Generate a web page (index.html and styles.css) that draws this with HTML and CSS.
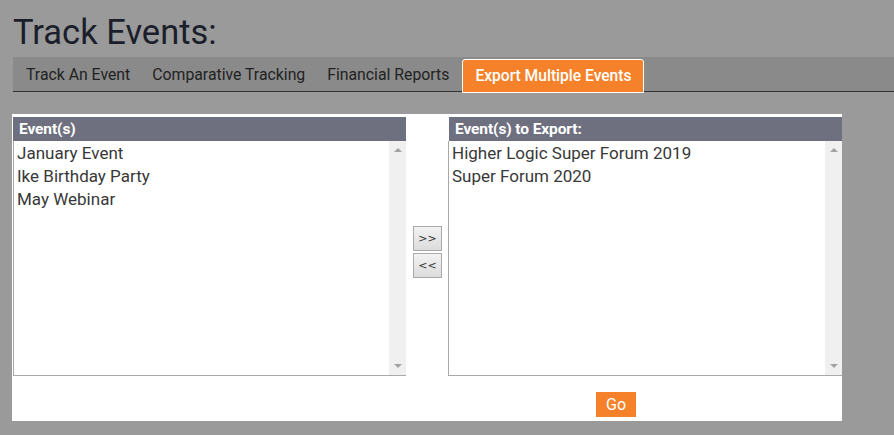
FILE: index.html
```html
<!DOCTYPE html>
<html>
<head>
<meta charset="utf-8">
<link rel="stylesheet" href="styles.css">
</head>
<body>
<h1 class="title">Track Events:</h1>
<nav class="tabs">
  <a class="tab">Track An Event</a>
  <a class="tab">Comparative Tracking</a>
  <a class="tab">Financial Reports</a>
  <a class="tab active">Export Multiple Events</a>
</nav>
<div class="panel">
  <div class="lists">
    <div class="col col-left">
      <div class="head">Event(s)</div>
      <div class="listbox">
        <ul class="items">
          <li>January Event</li>
          <li>Ike Birthday Party</li>
          <li>May Webinar</li>
        </ul>
        <div class="scroll"><span class="arr up"></span><span class="arr down"></span></div>
      </div>
    </div>
    <div class="mid">
      <button class="mv">&gt;&gt;</button>
      <button class="mv">&lt;&lt;</button>
    </div>
    <div class="col col-right">
      <div class="head">Event(s) to Export:</div>
      <div class="listbox">
        <ul class="items">
          <li>Higher Logic Super Forum 2019</li>
          <li>Super Forum 2020</li>
        </ul>
        <div class="scroll"><span class="arr up"></span><span class="arr down"></span></div>
      </div>
    </div>
  </div>
  <div class="go-row"><button class="go">Go</button></div>
</div>
</body>
</html>
```

FILE: styles.css
```css
html, body { margin: 0; padding: 0; }
body {
  background: #9a9a9a;
  font-family: Roboto, "Liberation Sans", sans-serif;
  width: 894px;
  height: 435px;
  overflow: hidden;
}
.title {
  margin: 0;
  padding: 12px 0 0 13px;
  height: 57px;
  box-sizing: border-box;
  font-weight: 400;
  font-size: 34.5px;
  line-height: 40px;
  color: #1b1e2b;
}
.tabs {
  margin-left: 13px;
  height: 34px;
  background: #8a8a8a;
  border-bottom: 1px solid #333;
  display: flex;
  align-items: flex-start;
  padding-left: 1px;
}
.tab {
  font-size: 15.8px;
  color: #222;
  padding: 0 11px 0 12px;
  line-height: 36px;
  white-space: nowrap;
}
.tab + .tab { padding-left: 11px; }
.tab.active {
  margin-top: 2px;
  margin-left: 2px;
  height: 34px;
  line-height: 32px;
  box-sizing: border-box;
  background: #f5822a;
  color: #fff;
  border: 1px solid #fff;
  border-radius: 3px 3px 0 0;
  padding: 0 11px 0 12px;
  font-size: 15.6px;
  font-weight: 500;
}
.panel {
  margin: 22px 0 0 12px;
  width: 830px;
  height: 307px;
  background: #fff;
  padding: 3px 0 0 1px;
  box-sizing: border-box;
}
.lists {
  display: flex;
}
.col-left { width: 393px; }
.col-right { width: 394px; }
.mid {
  width: 42px;
  padding-top: 109px;
  padding-left: 7px;
  box-sizing: border-box;
  display: flex;
  flex-direction: column;
  gap: 2px;
}
.mv {
  width: 29px;
  height: 25px;
  padding: 0;
  border: 1px solid #a9a9a9;
  background: linear-gradient(#f2f2f2, #dcdcdc);
  font-family: "DejaVu Sans", sans-serif;
  font-size: 11px;
  color: #333;
}
.head {
  height: 24px;
  background: #6e7080;
  color: #fff;
  font-weight: 700;
  font-size: 15.5px;
  line-height: 24px;
  padding-left: 6px;
  letter-spacing: -0.1px;
}
.col-right .head { margin-left: 1px; padding-left: 6px; }
.listbox {
  height: 235px;
  border-left: 1px solid #a9a9a9;
  border-bottom: 1px solid #a9a9a9;
  box-sizing: border-box;
  display: flex;
}
.items {
  list-style: none;
  margin: 0;
  padding: 1px 0 0 3px;
  flex: 1;
}
.items li {
  font-size: 17px;
  line-height: 23px;
  color: #383838;
}
.scroll {
  width: 17px;
  background: #f0f0f0;
  display: flex;
  flex-direction: column;
  justify-content: space-between;
  align-items: center;
  padding: 7px 0 7px;
}
.arr {
  width: 0;
  height: 0;
  border-left: 4px solid transparent;
  border-right: 4px solid transparent;
}
.arr.up { border-bottom: 4px solid #a3a3a3; }
.arr.down { border-top: 4px solid #a3a3a3; }
.go-row {
  padding: 16px 0 0 583px;
}
.go {
  width: 40px;
  height: 25px;
  border: 0;
  padding: 0;
  background: #f5822a;
  color: #fff;
  font-family: Roboto, "Liberation Sans", sans-serif;
  font-size: 16px;
}
```
